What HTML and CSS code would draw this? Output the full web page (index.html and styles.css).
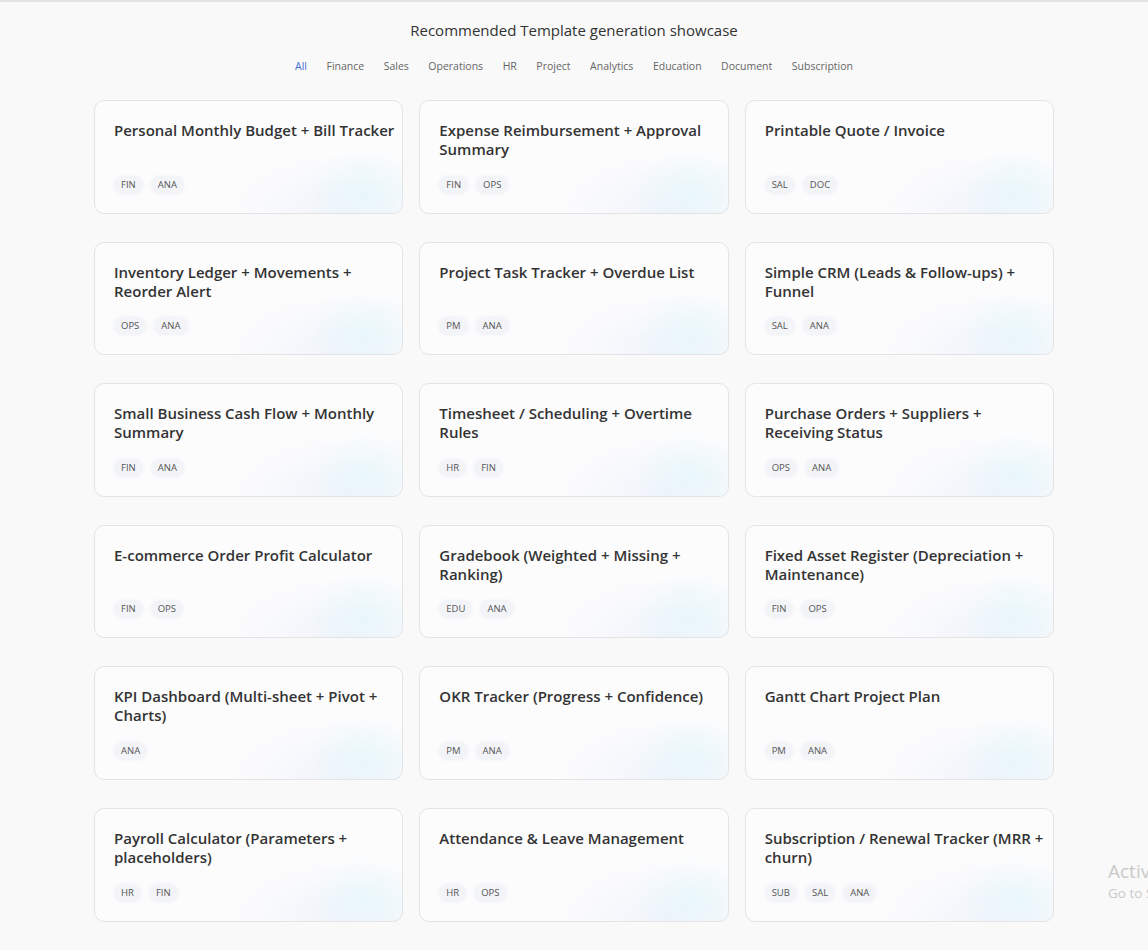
FILE: index.html
```html
<!DOCTYPE html>
<html lang="en">
<head>
<meta charset="utf-8">
<title>Recommended Template generation showcase</title>
<link rel="stylesheet" href="styles.css">
</head>
<body>
<main class="page">
  <h1 class="title">Recommended Template generation showcase</h1>
  <nav class="filters">
    <a class="filter active">All</a>
    <a class="filter">Finance</a>
    <a class="filter">Sales</a>
    <a class="filter">Operations</a>
    <a class="filter">HR</a>
    <a class="filter">Project</a>
    <a class="filter">Analytics</a>
    <a class="filter">Education</a>
    <a class="filter">Document</a>
    <a class="filter">Subscription</a>
  </nav>
  <section class="grid">
    <article class="card"><h2 class="card-title">Personal Monthly Budget + Bill Tracker</h2><div class="tags"><span class="tag">FIN</span><span class="tag">ANA</span></div></article>
    <article class="card"><h2 class="card-title">Expense Reimbursement + Approval Summary</h2><div class="tags"><span class="tag">FIN</span><span class="tag">OPS</span></div></article>
    <article class="card"><h2 class="card-title">Printable Quote / Invoice</h2><div class="tags"><span class="tag">SAL</span><span class="tag">DOC</span></div></article>

    <article class="card"><h2 class="card-title">Inventory Ledger + Movements + Reorder Alert</h2><div class="tags"><span class="tag">OPS</span><span class="tag">ANA</span></div></article>
    <article class="card"><h2 class="card-title">Project Task Tracker + Overdue List</h2><div class="tags"><span class="tag">PM</span><span class="tag">ANA</span></div></article>
    <article class="card"><h2 class="card-title">Simple CRM (Leads &amp; Follow-ups) + Funnel</h2><div class="tags"><span class="tag">SAL</span><span class="tag">ANA</span></div></article>

    <article class="card"><h2 class="card-title">Small Business Cash Flow + Monthly Summary</h2><div class="tags"><span class="tag">FIN</span><span class="tag">ANA</span></div></article>
    <article class="card"><h2 class="card-title">Timesheet / Scheduling + Overtime Rules</h2><div class="tags"><span class="tag">HR</span><span class="tag">FIN</span></div></article>
    <article class="card"><h2 class="card-title">Purchase Orders + Suppliers + Receiving Status</h2><div class="tags"><span class="tag">OPS</span><span class="tag">ANA</span></div></article>

    <article class="card"><h2 class="card-title">E-commerce Order Profit Calculator</h2><div class="tags"><span class="tag">FIN</span><span class="tag">OPS</span></div></article>
    <article class="card"><h2 class="card-title">Gradebook (Weighted + Missing + Ranking)</h2><div class="tags"><span class="tag">EDU</span><span class="tag">ANA</span></div></article>
    <article class="card"><h2 class="card-title">Fixed Asset Register (Depreciation + Maintenance)</h2><div class="tags"><span class="tag">FIN</span><span class="tag">OPS</span></div></article>

    <article class="card"><h2 class="card-title">KPI Dashboard (Multi-sheet + Pivot + Charts)</h2><div class="tags"><span class="tag">ANA</span></div></article>
    <article class="card"><h2 class="card-title">OKR Tracker (Progress + Confidence)</h2><div class="tags"><span class="tag">PM</span><span class="tag">ANA</span></div></article>
    <article class="card"><h2 class="card-title">Gantt Chart Project Plan</h2><div class="tags"><span class="tag">PM</span><span class="tag">ANA</span></div></article>

    <article class="card"><h2 class="card-title">Payroll Calculator (Parameters + placeholders)</h2><div class="tags"><span class="tag">HR</span><span class="tag">FIN</span></div></article>
    <article class="card"><h2 class="card-title">Attendance &amp; Leave Management</h2><div class="tags"><span class="tag">HR</span><span class="tag">OPS</span></div></article>
    <article class="card"><h2 class="card-title">Subscription / Renewal Tracker (MRR + churn)</h2><div class="tags"><span class="tag">SUB</span><span class="tag">SAL</span><span class="tag">ANA</span></div></article>
  </section>
</main>
<div class="watermark">
  <div class="wm-title">Activate Windows</div>
  <div class="wm-sub">Go to Settings to activate Windows.</div>
</div>
</body>
</html>
```

FILE: styles.css
```css
html, body {
  margin: 0;
  padding: 0;
}

body {
  background: #f9f9f9;
  border-top: 2px solid #e4e4e4;
  font-family: "Open Sans", "Noto Sans", "Liberation Sans", sans-serif;
  color: #2b2b2b;
  overflow: hidden;
  height: 948px;
}

.page {
  width: 960px;
  margin: 0 auto;
  padding-top: 18px;
}

.title {
  margin: 0;
  text-align: center;
  font-size: 15px;
  line-height: 20px;
  font-weight: 400;
  color: #333;
}

.filters {
  display: flex;
  justify-content: center;
  gap: 19.5px;
  margin-top: 18px;
  font-size: 10.5px;
  line-height: 16px;
}

.filter {
  color: #666;
  cursor: pointer;
}

.filter.active {
  color: #4a6fd6;
}

.grid {
  display: grid;
  grid-template-columns: repeat(3, 1fr);
  column-gap: 16px;
  row-gap: 28px;
  margin-top: 26px;
}

.card {
  box-sizing: border-box;
  height: 113.6px;
  padding: 20px 6px 19px 19px;
  border: 1px solid #e4e4e6;
  border-radius: 10px;
  background:
    radial-gradient(ellipse 60px 45px at 88% 82%, rgba(222, 246, 249, 0.55), rgba(234, 247, 249, 0) 100%),
    radial-gradient(ellipse 110px 60px at 80% 100%, rgba(236, 240, 250, 0.7), rgba(240, 242, 250, 0) 100%),
    #fcfcfd;
  display: flex;
  flex-direction: column;
  justify-content: space-between;
}

.card-title {
  margin: 0;
  font-size: 15px;
  line-height: 19px;
  font-weight: 600;
  color: #333;
}

.tags {
  display: flex;
  gap: 8px;
}

.tag {
  display: inline-block;
  padding: 0 7px;
  height: 18px;
  line-height: 18px;
  border-radius: 9px;
  background: #f3f4f8;
  box-shadow: 0 0 3px rgba(238, 240, 247, 0.9);
  font-size: 9.5px;
  color: #555;
}

.watermark {
  position: absolute;
  left: 1108px;
  top: 858px;
  white-space: nowrap;
  color: #c9c9c9;
  font-family: "Open Sans", "Noto Sans", sans-serif;
}

.wm-title {
  font-size: 19px;
  line-height: 26px;
}

.wm-sub {
  font-size: 13.5px;
  line-height: 18px;
}
```
